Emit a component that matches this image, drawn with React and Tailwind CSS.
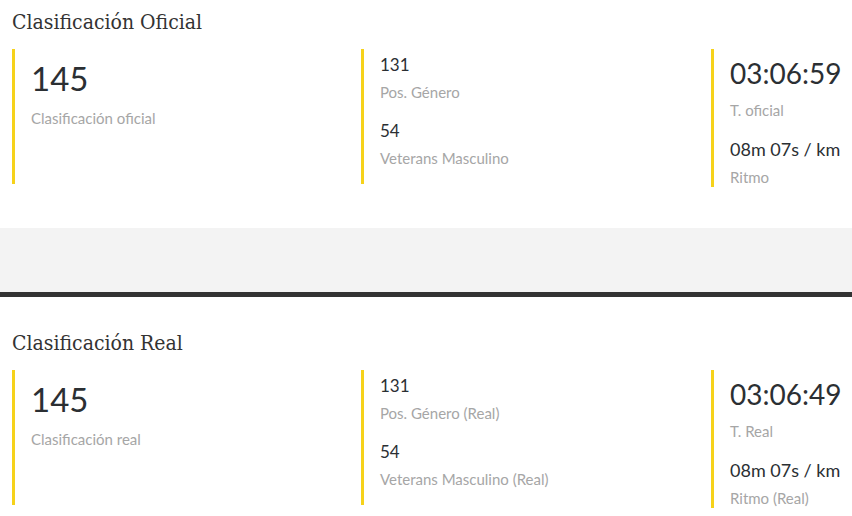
import React from "react";

const SECTIONS = [
  {
    title: "Clasificación Oficial",
    main: { value: "145", label: "Clasificación oficial" },
    middle: [
      { value: "131", label: "Pos. Género" },
      { value: "54", label: "Veterans Masculino" },
    ],
    time: { value: "03:06:59", label: "T. oficial" },
    pace: { value: "08m 07s / km", label: "Ritmo" },
  },
  {
    title: "Clasificación Real",
    main: { value: "145", label: "Clasificación real" },
    middle: [
      { value: "131", label: "Pos. Género (Real)" },
      { value: "54", label: "Veterans Masculino (Real)" },
    ],
    time: { value: "03:06:49", label: "T. Real" },
    pace: { value: "08m 07s / km", label: "Ritmo (Real)" },
  },
];

const titleFont = { fontFamily: '"DejaVu Serif Condensed", "DejaVu Serif", serif' };

const Label = ({ children, className = "" }) => (
  <div className={`text-[15px] leading-[20px] text-[#a6a6a6] whitespace-nowrap ${className}`}>{children}</div>
);

const Section = ({ data, className = "" }) => {
  return (
    <section className={`pl-3 ${className}`}>
      {/* title */}
      <h2 className="text-[21px] leading-[28px] text-[#333]" style={titleFont}>
        {data.title}
      </h2>

      <div className="flex items-start mt-[13px]">
        {/* main position */}
        <div className="w-[349px] shrink-0 border-l-[3px] border-[#f6d21a] pl-[16px] pt-[9px] pb-[56px]">
          <div className="text-[33px] leading-[40px] text-[#2b2f33]">{data.main.value}</div>
          <Label className="mt-[10px]">{data.main.label}</Label>
        </div>

        {/* category positions */}
        <div className="w-[350px] shrink-0 border-l-[3px] border-[#f6d21a] pl-[16px] pt-[4px] pb-[16px]">
          {data.middle.map((item, i) => (
            <div key={item.label} className={i > 0 ? "mt-[17px]" : ""}>
              <div className="text-[17px] leading-[24px] text-[#2b2f33]">{item.value}</div>
              <Label className="mt-[5px]">{item.label}</Label>
            </div>
          ))}
        </div>

        {/* time */}
        <div className="flex-1 shrink-0 border-l-[3px] border-[#f6d21a] pl-[16px] pt-[7px]">
          <div className="text-[28px] leading-[34px] text-[#2b2f33] whitespace-nowrap">{data.time.value}</div>
          <Label className="mt-[10px]">{data.time.label}</Label>
          <div className="mt-[17px] text-[18px] leading-[24px] text-[#2b2f33] whitespace-nowrap">{data.pace.value}</div>
          <Label className="mt-[6px]">{data.pace.label}</Label>
        </div>
      </div>
    </section>
  );
};

export default function App() {
  return (
    <div className="w-[852px] h-[516px] overflow-hidden bg-white" style={{ fontFamily: "Lato, sans-serif" }}>
      <Section data={SECTIONS[0]} className="pt-2 h-[228px]" />
      <div className="h-16 bg-[#f3f3f3]" />
      <div className="h-[5px] bg-[#333]" />
      <Section data={SECTIONS[1]} className="pt-8" />
    </div>
  );
}
